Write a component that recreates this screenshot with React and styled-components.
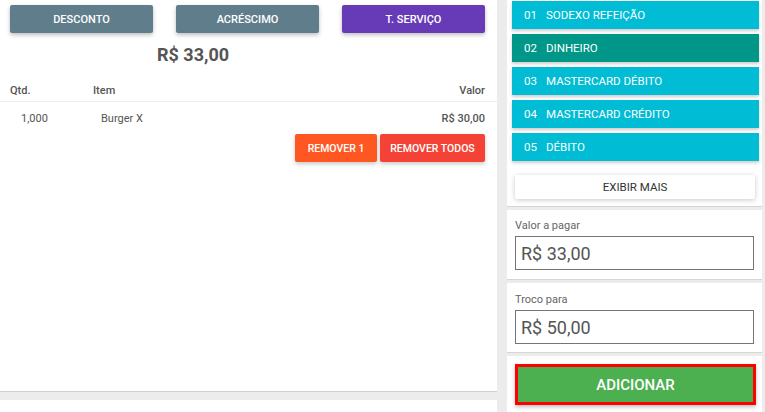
import React from 'react';
import styled, { createGlobalStyle } from 'styled-components';

const GlobalStyle = createGlobalStyle`
  html, body {
    margin: 0;
    padding: 0;
    background: #ececec;
    font-family: Roboto, 'Liberation Sans', sans-serif;
  }
`;

const Page = styled.div`
  display: flex;
  flex-direction: row;
  width: 765px;
  height: 412px;
  overflow: hidden;
`;

const LeftColumn = styled.div`
  width: 497px;
  display: flex;
  flex-direction: column;
`;

const OrderPanel = styled.div`
  height: 392px;
  flex-shrink: 0;
  box-sizing: border-box;
  background: #fff;
  border-bottom: 1px solid #d0d0d0;
  margin-bottom: 8px;
`;

const BottomPanel = styled.div`
  flex: 1;
  background: #fff;
`;

const ActionBar = styled.div`
  display: flex;
  justify-content: space-between;
  padding: 5px 12px 0 10px;
`;

const ActionButton = styled.button`
  width: 143px;
  height: 28px;
  border: none;
  border-radius: 2px;
  background: ${(p) => p.$color};
  color: #fff;
  font-family: Roboto, 'Liberation Sans', sans-serif;
  font-weight: 500;
  font-size: 11px;
  text-transform: uppercase;
  box-shadow: rgba(0, 0, 0, 0.26) 0px 2px 4px;
`;

const Total = styled.div`
  margin: 10px 0 0 157px;
  font-size: 18px;
  font-weight: 700;
  color: #555;
  line-height: 24px;
`;

const Table = styled.div`
  margin-top: 13px;
`;

const HeaderRow = styled.div`
  display: flex;
  padding: 0 12px 0 10px;
  height: 21px;
  align-items: center;
  border-bottom: 1px solid #eee;
  font-size: 11px;
  font-weight: 500;
  color: #555;
`;

const ItemRow = styled.div`
  display: flex;
  padding: 0 12px 0 21px;
  height: 32px;
  align-items: center;
  font-size: 11px;
  color: #555;
`;

const QtyCell = styled.div`
  width: ${(p) => p.$width}px;
`;

const ItemCell = styled.div`
  flex: 1;
`;

const ValueCell = styled.div`
  text-align: right;
  font-weight: ${(p) => (p.$bold ? 500 : 'inherit')};
`;

const RemoveBar = styled.div`
  display: flex;
  justify-content: flex-end;
  gap: 3px;
  padding-right: 12px;
`;

const RemoveButton = styled.button`
  height: 28px;
  width: ${(p) => p.$width}px;
  border: none;
  border-radius: 2px;
  background: ${(p) => p.$color};
  color: #fff;
  font-family: Roboto, 'Liberation Sans', sans-serif;
  font-weight: 500;
  font-size: 10.5px;
  box-shadow: rgba(0, 0, 0, 0.22) 0px 2px 4px;
`;

const RightColumn = styled.div`
  width: 255px;
  margin-left: 10px;
  display: flex;
  flex-direction: column;
`;

const Panel = styled.div`
  flex-shrink: 0;
  background: #fff;
  border-bottom: 1px solid #d6d6d6;
  margin-bottom: ${(p) => p.$gap}px;
  height: ${(p) => p.$height}px;
  box-sizing: border-box;
  padding: ${(p) => p.$pad};
`;

const PaymentList = styled.div`
  display: flex;
  flex-direction: column;
  gap: 5px;
  padding: 1px 3px 0 5px;
`;

const PaymentItem = styled.div`
  height: 28px;
  display: flex;
  align-items: center;
  padding-left: 12px;
  background: ${(p) => (p.$active ? '#009688' : '#00bcd4')};
  color: #fff;
  font-size: 11.5px;
  box-shadow: rgba(0, 0, 0, 0.2) 0px 2px 3px;
`;

const PaymentCode = styled.span`
  width: 22px;
`;

const MoreButton = styled.button`
  display: block;
  margin: 14px 0 0 8px;
  width: 240px;
  height: 24px;
  border: none;
  border-radius: 2px;
  background: #fff;
  color: #333;
  font-family: Roboto, 'Liberation Sans', sans-serif;
  font-size: 11.5px;
  box-shadow: rgba(0, 0, 0, 0.22) 0px 1px 5px;
`;

const FieldLabel = styled.div`
  font-size: 11px;
  color: #666;
  margin-bottom: 3px;
  line-height: 14px;
`;

const FieldBox = styled.div`
  height: 34px;
  box-sizing: border-box;
  border: 1px solid #757575;
  display: flex;
  align-items: center;
  padding-left: 5px;
  font-size: 18px;
  color: #555;
`;

const AddButton = styled.button`
  display: block;
  width: 241px;
  height: 41px;
  border: 3px solid #ff0000;
  background: #4caf50;
  color: #fff;
  font-family: Roboto, 'Liberation Sans', sans-serif;
  font-size: 15px;
  font-weight: 500;
  box-shadow: rgba(0, 0, 0, 0.25) 0px 2px 4px;
`;

const payments = [
  ['01', 'SODEXO REFEIÇÃO'],
  ['02', 'DINHEIRO'],
  ['03', 'MASTERCARD DÉBITO'],
  ['04', 'MASTERCARD CRÉDITO'],
  ['05', 'DÉBITO'],
];

export default function App() {
  return (
    <>
      <GlobalStyle />
      <Page>
        <LeftColumn>
          <OrderPanel>
            <ActionBar>
              <ActionButton $color="#607d8b">Desconto</ActionButton>
              <ActionButton $color="#607d8b">Acréscimo</ActionButton>
              <ActionButton $color="#673ab7">T. Serviço</ActionButton>
            </ActionBar>
            <Total>R$ 33,00</Total>
            <Table>
              <HeaderRow>
                <QtyCell $width={83}>Qtd.</QtyCell>
                <ItemCell>Item</ItemCell>
                <ValueCell>Valor</ValueCell>
              </HeaderRow>
              <ItemRow>
                <QtyCell $width={80}>1,000</QtyCell>
                <ItemCell>Burger X</ItemCell>
                <ValueCell $bold>R$ 30,00</ValueCell>
              </ItemRow>
              <RemoveBar>
                <RemoveButton $color="#ff5722" $width={82}>REMOVER 1</RemoveButton>
                <RemoveButton $color="#f44336" $width={105}>REMOVER TODOS</RemoveButton>
              </RemoveBar>
            </Table>
          </OrderPanel>
          <BottomPanel />
        </LeftColumn>
        <RightColumn>
          <Panel $height={207} $gap={3}>
            <PaymentList>
              {payments.map(([code, name]) => (
                <PaymentItem key={code} $active={code === '02'}>
                  <PaymentCode>{code}</PaymentCode>
                  {name}
                </PaymentItem>
              ))}
            </PaymentList>
            <MoreButton>EXIBIR MAIS</MoreButton>
          </Panel>
          <Panel $height={70} $gap={3} $pad="9px 8px 0">
            <FieldLabel>Valor a pagar</FieldLabel>
            <FieldBox>R$ 33,00</FieldBox>
          </Panel>
          <Panel $height={70} $gap={3} $pad="10px 8px 0">
            <FieldLabel>Troco para</FieldLabel>
            <FieldBox>R$ 50,00</FieldBox>
          </Panel>
          <Panel $height={60} $gap={0} $pad="8px 8px 0">
            <AddButton>ADICIONAR</AddButton>
          </Panel>
        </RightColumn>
      </Page>
    </>
  );
}
